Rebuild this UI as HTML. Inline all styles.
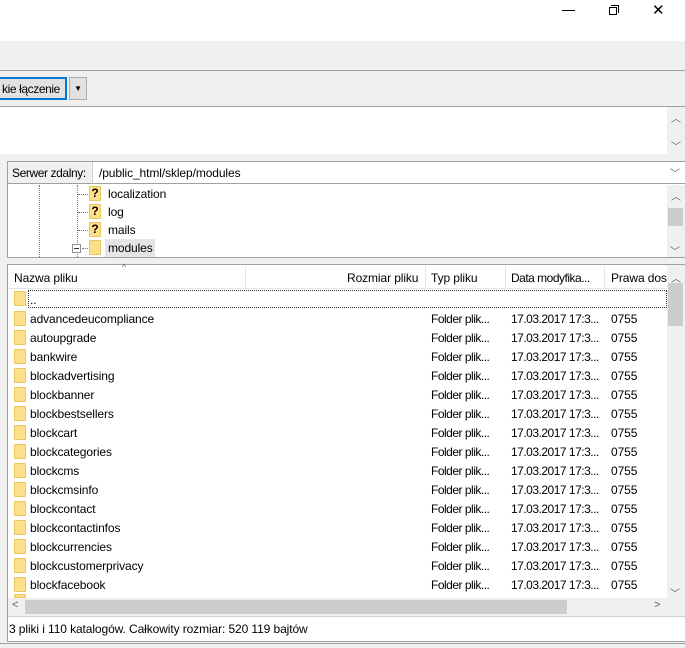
<!DOCTYPE html>
<html><head><meta charset="utf-8"><style>
*{margin:0;padding:0;box-sizing:border-box}
body{width:685px;height:648px;overflow:hidden;background:#f0f0f0;font-family:"Liberation Sans",sans-serif;font-size:12px;color:#000;position:relative;letter-spacing:-0.1px}
.a{position:absolute;white-space:nowrap}
.fold{position:absolute;width:12px;height:15px;background:#ffe08a;border:1px solid #e8c660;border-radius:1px}
.d{letter-spacing:-0.5px}
</style></head><body>
<div class="a" style="left:0;top:0;width:685px;height:41px;background:#fff"></div>
<div class="a" style="left:562px;top:10px;width:13px;height:1px;background:#000"></div>
<div class="a" style="left:609px;top:7px;width:8px;height:8px;border:1px solid #000"></div>
<div class="a" style="left:611px;top:5px;width:8px;height:8px;border-top:1px solid #000;border-right:1px solid #000"></div>
<div class="a" style="left:652px;top:3px;font-size:15px;line-height:15px">✕</div>
<div class="a" style="left:0;top:70px;width:685px;height:1px;background:#a0a0a0"></div>
<div class="a" style="left:-3px;top:77px;width:70px;height:23px;border:2px solid #0078d7;background:#e1e1e1;padding:3px 0 0 3px;letter-spacing:-0.4px">kie łączenie</div>
<div class="a" style="left:69px;top:77px;width:18px;height:23px;border:1px solid #adadad;background:#e1e1e1;font-size:8px;text-align:center;line-height:21px">▼</div>
<div class="a" style="left:0;top:106px;width:685px;height:1px;background:#a0a0a0"></div>
<div class="a" style="left:0;top:107px;width:667px;height:47px;background:#fff"></div>
<div class="a" style="left:667px;top:107px;width:18px;height:47px;background:#f0f0f0;color:#606060;font-size:10px;text-align:center">
<div style="margin-top:3px">︿</div><div style="margin-top:13px">﹀</div></div>
<div class="a" style="left:7px;top:161px;width:678px;height:97px;border:1px solid #a0a0a0;border-right:none;background:#fff"></div>
<div class="a" style="left:8px;top:162px;width:85px;height:22px;background:#f0f0f0;border-right:1px solid #d0d0d0;border-bottom:1px solid #a0a0a0;padding:4px 0 0 4px;letter-spacing:-0.4px">Serwer zdalny:</div>
<div class="a" style="left:93px;top:162px;width:592px;height:22px;border-bottom:1px solid #a0a0a0;padding:4px 0 0 6px">/public_html/sklep/modules</div>
<div class="a" style="left:670px;top:165px;color:#606060;font-size:10px">﹀</div>
<div class="a" style="left:39px;top:185px;height:72px;border-left:1px dotted #777"></div>
<div class="a" style="left:77px;top:185px;height:72px;border-left:1px dotted #777"></div>
<div class="a" style="left:78px;top:194px;width:10px;border-top:1px dotted #777"></div>
<div class="a" style="left:78px;top:212px;width:10px;border-top:1px dotted #777"></div>
<div class="a" style="left:78px;top:230px;width:10px;border-top:1px dotted #777"></div>
<div class="a" style="left:82px;top:248px;width:6px;border-top:1px dotted #777"></div>
<div class="a" style="left:72px;top:244px;width:9px;height:9px;border:1px solid #909090;background:#fff"><div style="margin:3px 1px;height:1px;background:#333"></div></div>
<div class="fold" style="left:89px;top:186px;font-weight:bold;font-size:12px;line-height:12px;text-align:center">?</div>
<div class="fold" style="left:89px;top:204px;font-weight:bold;font-size:12px;line-height:12px;text-align:center">?</div>
<div class="fold" style="left:89px;top:222px;font-weight:bold;font-size:12px;line-height:12px;text-align:center">?</div>
<div class="fold" style="left:89px;top:240px"></div>
<div class="a" style="left:108px;top:187px">localization</div>
<div class="a" style="left:108px;top:205px">log</div>
<div class="a" style="left:108px;top:223px">mails</div>
<div class="a" style="left:105px;top:239px;width:50px;height:18px;background:#e5e5e5;padding:2px 0 0 3px">modules</div>
<div class="a" style="left:667px;top:185px;width:18px;height:72px;background:#f0f0f0;color:#606060;font-size:10px;text-align:center"><div style="margin-top:3px">︿</div></div>
<div class="a" style="left:668px;top:208px;width:15px;height:18px;background:#cdcdcd"></div>
<div class="a" style="left:670px;top:243px;color:#606060;font-size:10px">﹀</div>
<div class="a" style="left:7px;top:264px;width:678px;height:378px;border:1px solid #a0a0a0;border-right:none;background:#fff"></div>
<div class="a" style="left:8px;top:265px;width:659px;height:24px;background:#fff;border-bottom:1px solid #e5e5e5"></div>
<div class="a" style="left:122px;top:262px;font-size:9px;color:#666">^</div>
<div class="a" style="left:14px;top:271px">Nazwa pliku</div>
<div class="a" style="left:245px;top:266px;width:1px;height:22px;background:#e5e5e5"></div>
<div class="a" style="left:347px;top:271px">Rozmiar pliku</div>
<div class="a" style="left:425px;top:266px;width:1px;height:22px;background:#e5e5e5"></div>
<div class="a" style="left:431px;top:271px">Typ pliku</div>
<div class="a" style="left:505px;top:266px;width:1px;height:22px;background:#e5e5e5"></div>
<div class="a d" style="left:511px;top:271px">Data modyfika...</div>
<div class="a" style="left:604px;top:266px;width:1px;height:22px;background:#e5e5e5"></div>
<div class="a" style="left:611px;top:271px;width:56px;overflow:hidden">Prawa dost</div>
<div class="a" style="left:667px;top:265px;width:18px;height:333px;background:#f0f0f0;color:#606060;font-size:10px;text-align:center"><div style="margin-top:5px">︿</div></div>
<div class="a" style="left:668px;top:283px;width:15px;height:43px;background:#cdcdcd"></div>
<div class="a" style="left:670px;top:585px;color:#606060;font-size:10px">﹀</div>
<div class="fold" style="left:14px;top:291px"></div>
<div class="a" style="left:28px;top:290px;width:639px;height:18px;border:1px dotted #333;padding:2px 0 0 1px">..</div>
<div id="rows"></div>
<div class="a" style="left:8px;top:598px;width:677px;height:18px;background:#f0f0f0;color:#606060;font-size:11px"><span style="position:absolute;left:4px;top:1px">&lt;</span><span style="position:absolute;left:646px;top:1px">&gt;</span></div>
<div class="a" style="left:25px;top:600px;width:542px;height:14px;background:#cdcdcd"></div>
<div class="a" style="left:8px;top:616px;width:677px;height:1px;background:#d0d0d0"></div>
<div class="a" style="left:9px;top:622px">3 pliki i 110 katalogów. Całkowity rozmiar: 520 119 bajtów</div>
<div class="a" style="left:0;top:643px;width:685px;height:1px;background:#a0a0a0"></div>
<script>
var n=["advancedeucompliance","autoupgrade","bankwire","blockadvertising","blockbanner","blockbestsellers","blockcart","blockcategories","blockcms","blockcmsinfo","blockcontact","blockcontactinfos","blockcurrencies","blockcustomerprivacy","blockfacebook"];
var h="";
n.forEach(function(s,i){var t=309+i*19;
h+='<div class="fold" style="left:14px;top:'+(t+2)+'px"></div><div class="a" style="left:30px;top:'+(t+3)+'px">'+s+'</div><div class="a d" style="left:431px;top:'+(t+3)+'px">Folder plik...</div><div class="a d" style="left:511px;top:'+(t+3)+'px">17.03.2017 17:3...</div><div class="a" style="left:611px;top:'+(t+3)+'px">0755</div>';});
h+='<div class="fold" style="left:14px;top:594px;height:4px"></div>';
document.getElementById("rows").innerHTML=h;
</script>
</body></html>
